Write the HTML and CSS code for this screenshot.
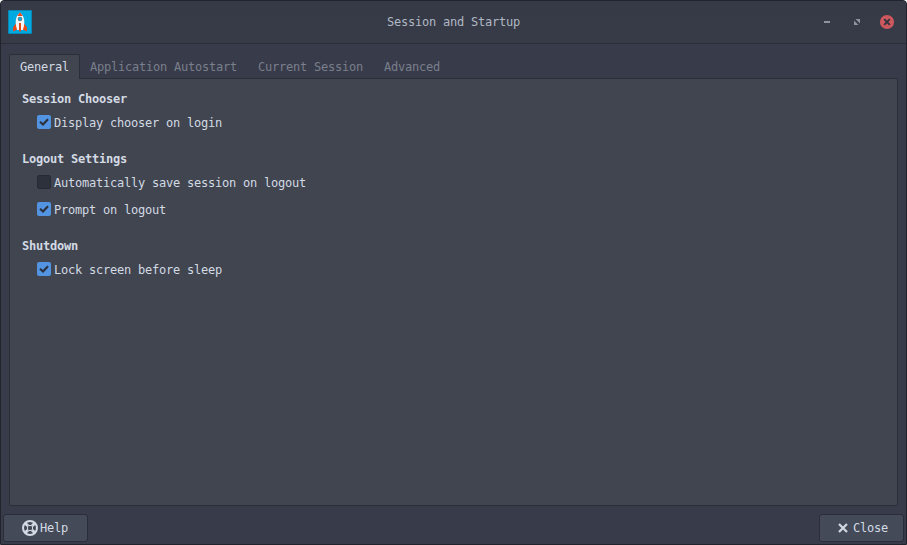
FILE: index.html
```html
<!DOCTYPE html>
<html lang="en">
<head>
<meta charset="utf-8">
<title>Session and Startup</title>
<link rel="stylesheet" href="styles.css">
</head>
<body>
<div class="window">
  <header class="titlebar">
    <svg class="app-icon" width="24" height="24" viewBox="0 0 24 24">
      <rect width="24" height="24" rx="1" fill="#0788b5"/>
      <rect x="1" y="1" width="22" height="22" fill="#00a9df"/>
      <path d="M8.500 12.500L5 17.500V21.500L9.500 19.500ZM15.500 12.500L19 17.500V21.500L14.500 19.500Z" fill="#e64a19"/>
      <path d="M12 2.500C9 5 7.700 8 7.700 12C7.700 15 8.400 18 9.200 20H14.800C15.600 18 16.300 15 16.300 12C16.300 8 15 5 12 2.500Z" fill="#f5f5f5"/>
      <path d="M12 2.300L9.200 6H14.800Z" fill="#e64a19"/>
      <circle cx="12" cy="9" r="2.300" fill="#607d8b"/>
      <circle cx="12" cy="9" r="1.400" fill="#00b5ee"/>
      <path d="M11 13H13V21.500H11Z" fill="#e64a19"/>
    </svg>
    <h1 class="title">Session and Startup</h1>
    <div class="controls">
      <svg width="16" height="16" viewBox="0 0 16 16"><path d="M5 7H11V9H5Z" fill="#90949e"/></svg>
      <svg width="16" height="16" viewBox="0 0 16 16"><path d="M6.500 5H11V9.500ZM5 6.500V11H9.500Z" fill="#90949e"/></svg>
      <svg width="16" height="16" viewBox="0 0 16 16"><circle cx="8" cy="8" r="7.100" fill="#cc575d"/><path d="M5.200 5.200L10.800 10.800M10.800 5.200L5.200 10.800" stroke="#2f343f" stroke-width="1.900"/></svg>
    </div>
  </header>
  <main class="notebook">
    <nav class="tabs">
      <span class="tab active">General</span>
      <span class="tab">Application Autostart</span>
      <span class="tab">Current Session</span>
      <span class="tab">Advanced</span>
    </nav>
    <div class="panel">
      <section class="group">
        <h2>Session Chooser</h2>
        <div class="option"><span class="check on"><svg width="14" height="14" viewBox="0 0 14 14"><path d="M3 6.800L6 9.500L11 4.300" /></svg></span>Display chooser on login</div>
      </section>
      <section class="group">
        <h2>Logout Settings</h2>
        <div class="option"><span class="check"></span>Automatically save session on logout</div>
        <div class="option"><span class="check on"><svg width="14" height="14" viewBox="0 0 14 14"><path d="M3 6.800L6 9.500L11 4.300" /></svg></span>Prompt on logout</div>
      </section>
      <section class="group">
        <h2>Shutdown</h2>
        <div class="option"><span class="check on"><svg width="14" height="14" viewBox="0 0 14 14"><path d="M3 6.800L6 9.500L11 4.300" /></svg></span>Lock screen before sleep</div>
      </section>
    </div>
  </main>
  <footer class="actions">
    <div class="button help">
      <svg width="16" height="16" viewBox="0 0 16 16" fill="none" stroke="#d3dae3"><circle cx="8" cy="8" r="7" stroke-width="2"/><rect x="5.500" y="5.500" width="5" height="5" rx="1.500" stroke-width="1"/><path d="M3.200 3.200L5.800 5.800M12.800 3.200L10.200 5.800M3.200 12.800L5.800 10.200M12.800 12.800L10.200 10.200" stroke-width="3"/></svg>
      <span>Help</span>
    </div>
    <div class="button">
      <svg width="16" height="16" viewBox="0 0 16 16"><path d="M4 4L12 12M12 4L4 12" stroke="#d3dae3" stroke-width="2.200"/></svg>
      <span>Close</span>
    </div>
  </footer>
</div>
</body>
</html>
```
FILE: styles.css
```css
* { box-sizing: border-box; }
html { background: #fff; }
body {
  margin: 0;
  font: 12px/14px "DejaVu Sans Mono", monospace;
  letter-spacing: -0.2246px;
  color: #d3dae3;
}
svg { display: block; }
.window {
  height: 545px;
  display: flex;
  flex-direction: column;
  background: #383b4a;
  border: 1px solid #21242d;
  border-radius: 4px 4px 0 0;
  overflow: hidden;
}
.titlebar {
  height: 43px;
  flex: none;
  display: grid;
  grid-template-columns: 1fr auto 1fr;
  align-items: center;
  padding: 0 11px 1px 7px;
  background: linear-gradient(#353a46, #373b47);
  border-bottom: 1px solid #2b2e39;
}
.title { margin: 0 0 0 4px; font-size: 12px; font-weight: normal; color: #b0b7c3; }
.controls { display: flex; gap: 14px; justify-content: flex-end; }
.notebook {
  flex: 1;
  display: flex;
  flex-direction: column;
  padding: 10px 8px 0;
}
.tabs { display: flex; height: 24px; }
.tab { height: 25px; padding: 6px 10px 0 11px; color: #7a7f8c; }
.tab.active {
  position: relative;
  padding: 5px 10px 0;
  background: #404550;
  border: 1px solid #2b2e39;
  border-bottom: 0;
  border-radius: 2px 2px 0 0;
  color: #d3dae3;
}
.active + .tab { padding-left: 10px; }
.panel {
  flex: 1;
  padding: 13px 12px;
  background: #404550;
  border: 1px solid #2b2e39;
  border-radius: 0 0 2px 2px;
}
.group { margin-bottom: 16px; }
h2 { margin: 0 0 4px; font-size: 12px; line-height: 14px; }
.option { display: flex; align-items: center; height: 26px; margin-left: 15px; gap: 3px; }
.option + .option { margin-top: 1px; }
.check {
  width: 14px;
  height: 14px;
  margin-top: -2px;
  background: #2d313c;
  border: 1px solid #262a34;
  border-radius: 2px;
}
.check.on { background: #5294e2; border: 0; }
.check path { fill: none; stroke: #2b303b; stroke-width: 2.2; }
.actions {
  height: 38px;
  flex: none;
  display: flex;
  justify-content: space-between;
  padding: 8px 2px 2px;
}
.button {
  width: 85px;
  height: 28px;
  display: flex;
  align-items: center;
  justify-content: center;
  gap: 2px;
  background: #444a58;
  border: 1px solid #2b2e39;
  border-radius: 3px;
}
.help { justify-content: flex-start; padding-left: 18px; }
```
